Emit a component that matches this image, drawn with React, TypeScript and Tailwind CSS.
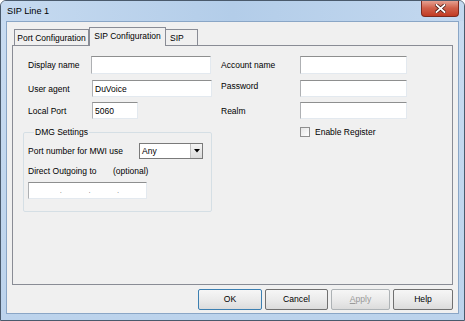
import React from "react";

function Field({ w, h = "h-[17px]", children }: { w: string; h?: string; children?: React.ReactNode }) {
  return (
    <div
      className={`${w} ${h} flex items-center border border-t-[#8e8f8f] border-l-[#aeb0b3] border-r-[#e3e9ef] border-b-[#e3e9ef] bg-white pl-[2px] text-[8.5px] text-black`}
    >
      {children}
    </div>
  );
}

function Btn({ w, children, disabled, primary }: { w: string; children: React.ReactNode; disabled?: boolean; primary?: boolean }) {
  return (
    <div
      className={`${w} h-[21px] flex items-center justify-center rounded-[2px] border bg-gradient-to-b from-[#f6f6f6] via-[#ebebeb] to-[#dcdcdc] text-[8.6px] ${
        disabled ? "border-[#adb2b5] text-[#9a9a9a]" : primary ? "border-[#3c7fb1] text-black" : "border-[#707070] text-black"
      }`}
    >
      {children}
    </div>
  );
}

export default function App() {
  return (
    <div className="w-[465px] h-[321px] flex flex-col overflow-hidden rounded-t-[6px] border border-[#4a5a6c] bg-gradient-to-b from-[#c9dcf1] to-[#bcd3ec] px-[5px] pb-[6px] font-['Liberation_Sans',Arial,sans-serif] text-black">
      {/* Title bar */}
      <div className="h-[20px] flex items-start justify-between bg-gradient-to-r from-[#c6daf0] via-[#b3cde9] to-[#c3d8ef] -mx-[5px] px-[6px]">
        <span className="mt-[5px] text-[9.2px] leading-[11px]">SIP Line 1</span>
        <div className="mr-[-1px] -mt-px w-[38px] h-[17px] flex items-center justify-center rounded-b-[4px] border border-t-0 border-[#7d2a1e] bg-gradient-to-b from-[#e8a99b] via-[#d0604a] to-[#c13a22]">
          <svg width="11" height="9" viewBox="0 0 11 9">
            <path d="M1.5 1 L9.5 8 M9.5 1 L1.5 8" stroke="#4b1a12" strokeWidth="3.4" strokeLinecap="square" />
            <path d="M1.5 1 L9.5 8 M9.5 1 L1.5 8" stroke="#ffffff" strokeWidth="1.8" strokeLinecap="square" />
          </svg>
        </div>
      </div>

      {/* Client area */}
      <div className="flex-1 flex flex-col border border-[#8aa6c6] bg-[#f0f0f0] px-[5px] pt-[5px]">
        {/* Tabs */}
        <div className="flex items-end h-[18px] pl-[2px] text-[8.5px] leading-[10px]">
          <div className="w-[75px] h-[16px] flex items-center justify-center border border-b-0 border-[#898c95] bg-[#f0f0f0]">
            Port Configuration
          </div>
          <div className="relative z-10 w-[77px] h-[19px] -mb-px flex items-center justify-center border border-b-0 border-[#898c95] bg-[#f0f0f0] pb-[2px]">
            SIP Configuration
          </div>
          <div className="w-[32px] h-[16px] flex items-center border border-b-0 border-l-0 border-[#898c95] bg-[#f0f0f0] pl-[4px]">
            SIP
          </div>
        </div>

        {/* Panel */}
        <div className="h-[240px] flex border border-[#898c95] bg-[#f0f0f0] pl-[10px] pt-[10px] text-[8.5px] leading-[10px]">
          {/* Left column */}
          <div className="w-[189px] flex flex-col">
            <div className="h-[18px] flex items-center">
              <span className="w-[68px] pl-[5px]">Display name</span>
              <Field w="w-[120px]" h="h-[18px]" />
            </div>
            <div className="mt-[6px] h-[17px] flex items-center">
              <span className="w-[69px] pl-[5px]">User agent</span>
              <Field w="w-[120px]">DuVoice</Field>
            </div>
            <div className="mt-[5px] h-[17px] flex items-center">
              <span className="w-[69px] pl-[5px]">Local Port</span>
              <Field w="w-[46px]">5060</Field>
            </div>

            <fieldset className="mt-[8px] h-[85px] border border-[#d5dfe5] rounded-[2px] pl-[4px]">
              <legend className="ml-[6px] px-[1px] leading-[10px]">DMG Settings</legend>
              <div className="mt-[6px] h-[16px] flex items-center">
                <span className="w-[111px]">Port number for MWI use</span>
                <div className="w-[64px] h-[16px] flex items-center border border-[#7a7a7a] bg-white pl-[2px]">
                  <span className="flex-1">Any</span>
                  <div className="w-[12px] h-[14px] flex items-center justify-center border-l border-[#c0c0c0] bg-gradient-to-b from-[#f4f4f4] to-[#dcdcdc]">
                    <svg width="6" height="4" viewBox="0 0 6 4">
                      <path d="M0 0 H6 L3 3.5 Z" fill="#000" />
                    </svg>
                  </div>
                </div>
              </div>
              <div className="mt-[7px] h-[10px] flex items-center">
                <span className="w-[85px]">Direct Outgoing to</span>
                <span>(optional)</span>
              </div>
              <div className="mt-[6px]">
                <Field w="w-[119px]">
                  <span className="w-[29px]" />
                  <span className="text-[6px]">.</span>
                  <span className="w-[27px]" />
                  <span className="text-[6px]">.</span>
                  <span className="w-[27px]" />
                  <span className="text-[6px]">.</span>
                </Field>
              </div>
            </fieldset>
          </div>

          {/* Right column */}
          <div className="ml-[9px] flex flex-col">
            <div className="h-[18px] flex items-center">
              <span className="w-[79px]">Account name</span>
              <Field w="w-[107px]" h="h-[18px]" />
            </div>
            <div className="mt-[6px] h-[17px] flex items-start">
              <span className="w-[79px] pt-[1px]">Password</span>
              <Field w="w-[107px]" />
            </div>
            <div className="mt-[5px] h-[17px] flex items-center">
              <span className="w-[79px]">Realm</span>
              <Field w="w-[107px]" />
            </div>
            <div className="mt-[8px] h-[10px] flex items-center pl-[79px]">
              <div className="w-[10px] h-[10px] border border-[#8f8f8f] bg-gradient-to-br from-[#e6e6e6] to-white" />
              <span className="ml-[5px]">Enable Register</span>
            </div>
          </div>
        </div>

        {/* Buttons */}
        <div className="mt-[4px] flex justify-end gap-[3px]">
          <Btn w="w-[64px]" primary>OK</Btn>
          <Btn w="w-[63px]">Cancel</Btn>
          <Btn w="w-[59px]" disabled>
            <span><span className="underline">A</span>pply</span>
          </Btn>
          <Btn w="w-[60px]">Help</Btn>
        </div>
      </div>
    </div>
  );
}
